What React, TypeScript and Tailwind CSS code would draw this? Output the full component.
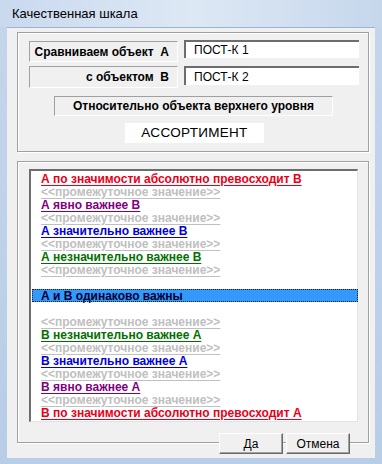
import React from "react";

const ITEMS: { text: string; color: string; selected?: boolean; blank?: boolean }[] = [
  { text: "А по значимости абсолютно превосходит В", color: "text-[#e8001a]" },
  { text: "<<промежуточное значение>>", color: "text-[#c0c0c0]" },
  { text: "А явно важнее В", color: "text-[#800080]" },
  { text: "<<промежуточное значение>>", color: "text-[#c0c0c0]" },
  { text: "А значительно важнее В", color: "text-[#0000e0]" },
  { text: "<<промежуточное значение>>", color: "text-[#c0c0c0]" },
  { text: "А незначительно важнее В", color: "text-[#007000]" },
  { text: "<<промежуточное значение>>", color: "text-[#c0c0c0]" },
  { text: "", color: "", blank: true },
  { text: "А и В одинаково важны", color: "text-[#000030]", selected: true },
  { text: "", color: "", blank: true },
  { text: "<<промежуточное значение>>", color: "text-[#c0c0c0]" },
  { text: "В незначительно важнее А", color: "text-[#007000]" },
  { text: "<<промежуточное значение>>", color: "text-[#c0c0c0]" },
  { text: "В значительно важнее А", color: "text-[#0000e0]" },
  { text: "<<промежуточное значение>>", color: "text-[#c0c0c0]" },
  { text: "В явно важнее А", color: "text-[#800080]" },
  { text: "<<промежуточное значение>>", color: "text-[#c0c0c0]" },
  { text: "В по значимости абсолютно превосходит А", color: "text-[#e8001a]" },
];

const font = "font-['Liberation_Sans',Arial,sans-serif]";

const sunkenLabel =
  "bg-[#f0f0f0] border border-t-[#a0a0a0] border-l-[#a0a0a0] border-b-white border-r-white";

export default function App() {
  return (
    <div className={`w-[382px] h-[464px] flex flex-col bg-gradient-to-b from-[#c4d6ec] to-[#b8cde6] ${font}`}>
      {/* title bar */}
      <div className="h-[27px] flex items-center pl-[12px] text-[13px] text-black bg-gradient-to-r from-[#c9d9ee] via-[#dde8f4] to-[#c6d7ec]">
        Качественная шкала
      </div>

      {/* client area */}
      <div className="mx-[7px] h-[431px] bg-[#f0f0f0] border-t border-[#9fb4cc] flex flex-col">
        {/* top group */}
        <div className="ml-[10px] mt-[4px] w-[352px] h-[120px] border border-[#a0a0a0] shadow-[inset_1px_1px_0_#fff,1px_1px_0_#fff] flex flex-col">
          <div className="flex items-start ml-[11px] mt-[8px] gap-[6px]">
            <div className={`w-[149px] h-[21px] ${sunkenLabel} flex items-center justify-end pr-[8px] text-[12px] font-bold`}>
              Сравниваем объект&nbsp;&nbsp;А
            </div>
            <div className="w-[175px] h-[18px] bg-white border-t-2 border-l-2 border-t-[#6d6d6d] border-l-[#6d6d6d] flex items-center pl-[8px] text-[12px] -mt-[1px]">
              ПОСТ-К 1
            </div>
          </div>
          <div className="flex items-start ml-[11px] mt-[4px] gap-[6px]">
            <div className={`w-[149px] h-[22px] ${sunkenLabel} flex items-center justify-end pr-[8px] text-[12px] font-bold`}>
              с объектом&nbsp;&nbsp;В
            </div>
            <div className="w-[175px] h-[19px] bg-white border-t-2 border-l-2 border-t-[#6d6d6d] border-l-[#6d6d6d] flex items-center pl-[8px] text-[12px]">
              ПОСТ-К 2
            </div>
          </div>
          <div className={`ml-[36px] mt-[8px] w-[279px] h-[20px] ${sunkenLabel} flex items-center justify-center text-[12px] font-bold`}>
            Относительно объекта верхнего уровня
          </div>
          <div className="ml-[107px] mt-[7px] w-[139px] h-[20px] bg-white flex items-center justify-center text-[13.5px] tracking-[0.3px]">
            АССОРТИМЕНТ
          </div>
        </div>

        {/* bottom group */}
        <div className="ml-[10px] mt-[9px] w-[352px] h-[282px] border border-[#a0a0a0] shadow-[inset_1px_1px_0_#fff,1px_1px_0_#fff]">
          <div className="ml-[11px] mt-[7px] w-[329px] h-[253px] bg-white border-t-2 border-l-2 border-t-[#6d6d6d] border-l-[#6d6d6d] border-r border-b border-r-[#e3e3e3] border-b-[#e3e3e3] pt-[1px] pl-[1px]">
            {ITEMS.map((it, i) => (
              <div
                key={i}
                className={`h-[13px] flex items-center pl-[9px] text-[12px] font-bold leading-none ${
                  it.selected ? "bg-[#3399ff] outline outline-1 outline-dotted outline-[#1a1a1a] -outline-offset-1 w-[326px]" : ""
                }`}
              >
                {!it.blank && (
                  <span className={`${it.color} ${it.selected ? "" : "underline underline-offset-[2px]"}`}>{it.text}</span>
                )}
              </div>
            ))}
          </div>
        </div>

        {/* buttons */}
        <div className="relative z-10 -mt-[10px] flex justify-end gap-[3px] mr-[25px]">
          <button className="w-[64px] h-[21px] bg-[#f0f0f0] border border-t-white border-l-white border-b-[#696969] border-r-[#696969] shadow-[inset_-1px_-1px_0_#a0a0a0] text-[12px]">
            Да
          </button>
          <button className="w-[64px] h-[21px] bg-[#f0f0f0] border border-t-white border-l-white border-b-[#696969] border-r-[#696969] shadow-[inset_-1px_-1px_0_#a0a0a0] text-[12px]">
            Отмена
          </button>
        </div>
      </div>
    </div>
  );
}
